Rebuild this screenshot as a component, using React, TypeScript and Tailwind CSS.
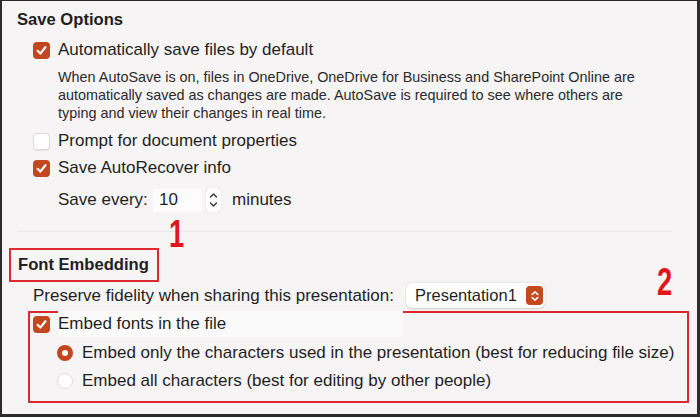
import React from "react";

function Check({ on }: { on: boolean }) {
  if (!on)
    return (
      <div className="w-[17px] h-[17px] rounded-[4px] bg-white border border-[#dcdada] shadow-[0_0.5px_1px_rgba(0,0,0,0.08)] shrink-0" />
    );
  return (
    <div className="w-[17px] h-[17px] rounded-[4px] bg-[#c2461e] flex items-center justify-center shrink-0">
      <svg width="13" height="13" viewBox="0 0 13 13">
        <path d="M2.6 6.8 L5.3 9.6 L10.4 3.2" fill="none" stroke="white" strokeWidth="2.2" strokeLinecap="round" strokeLinejoin="round" />
      </svg>
    </div>
  );
}

function Radio({ on }: { on: boolean }) {
  if (!on)
    return <div className="w-[16px] h-[16px] rounded-full bg-white border border-[#dedcdc] shrink-0" />;
  return (
    <div className="w-[16px] h-[16px] rounded-full bg-[#c2461e] flex items-center justify-center shrink-0">
      <div className="w-[6px] h-[6px] rounded-full bg-white" />
    </div>
  );
}

export default function App() {
  return (
    <div className="w-[700px] h-[417px] overflow-hidden border-[#2b2b2b] border-t border-l-2 border-r-[3px] border-b-[3px] bg-[#f6f4f4] font-['Liberation_Sans',Arial,sans-serif] text-[#1f1f1f]">
      <div className="relative h-full">
        {/* Save Options */}
        <div className="pt-[9px] pl-[15px] text-[16.6px] font-bold leading-[20px]">Save Options</div>

        <div className="mt-[10px] pl-[31px] flex items-center gap-[8px] h-[20px] text-[17px]">
          <Check on={true} />
          <span>Automatically save files by default</span>
        </div>

        <div className="mt-[8px] pl-[56px] text-[14.4px] leading-[18px] text-[#2a2a2a]">
          <div>When AutoSave is on, files in OneDrive, OneDrive for Business and SharePoint Online are</div>
          <div>automatically saved as changes are made. AutoSave is required to see where others are</div>
          <div>typing and view their changes in real time.</div>
        </div>

        <div className="mt-[9px] pl-[31px] flex items-center gap-[8px] h-[20px] text-[17px]">
          <Check on={false} />
          <span>Prompt for document properties</span>
        </div>

        <div className="mt-[7px] pl-[31px] flex items-center gap-[8px] h-[20px] text-[17px]">
          <Check on={true} />
          <span>Save AutoRecover info</span>
        </div>

        <div className="mt-[10px] pl-[56px] flex items-center h-[24px] text-[17px]">
          <span className="w-[95px]">Save every:</span>
          <div className="w-[49px] h-[23px] bg-[#fdfcfc] flex items-center pl-[6px]">10</div>
          <div className="ml-[4px] w-[15px] h-[24px] rounded-[4px] bg-white shadow-[0_0_1px_rgba(0,0,0,0.35)] flex flex-col items-center justify-center">
            <svg width="11" height="20" viewBox="0 0 11 20">
              <path d="M2.5 7 L5.5 4 L8.5 7" fill="none" stroke="#333" strokeWidth="1.4" strokeLinecap="round" strokeLinejoin="round" />
              <path d="M2.5 13 L5.5 16 L8.5 13" fill="none" stroke="#333" strokeWidth="1.4" strokeLinecap="round" strokeLinejoin="round" />
            </svg>
          </div>
          <span className="ml-[11px]">minutes</span>
        </div>

        <div className="mt-[19px] ml-[15px] mr-[25px] h-px bg-[#e9e7e7]" />

        {/* Font Embedding */}
        <div className="mt-[16px] ml-[7px] w-[150px] h-[34px] border-2 border-[#de2a2e] flex items-center pl-[7px] text-[16.6px] font-bold">
          Font Embedding
        </div>

        <div className="mt-px pl-[31px] flex items-center h-[25px] text-[17px]">
          <span className="w-[373px]">Preserve fidelity when sharing this presentation:</span>
          <div className="w-[139px] h-[25px] rounded-[6px] bg-white shadow-[0_0.5px_2px_rgba(0,0,0,0.18)] flex items-center pl-[9px] pr-[2px]">
            <span className="flex-1 text-[16.5px]">Presentation1</span>
            <div className="w-[17px] h-[19px] rounded-[4px] bg-[#c4491f] flex items-center justify-center">
              <svg width="10" height="14" viewBox="0 0 10 14">
                <path d="M2.2 5.5 L5 2.8 L7.8 5.5" fill="none" stroke="white" strokeWidth="1.6" strokeLinecap="round" strokeLinejoin="round" />
                <path d="M2.2 8.5 L5 11.2 L7.8 8.5" fill="none" stroke="white" strokeWidth="1.6" strokeLinecap="round" strokeLinejoin="round" />
              </svg>
            </div>
          </div>
        </div>

        <div className="mt-[3px] ml-[26px] w-[661px] h-[92px] border-2 border-[#de2a2e] text-[17px]">
          <div className="mt-[1px] pl-[3px] flex items-center gap-[8px] h-[20px]">
            <Check on={true} />
            <span className="bg-[#fbfafa] w-[345px]">Embed fonts in the file</span>
          </div>
          <div className="mt-[9px] pl-[27px] flex items-center gap-[9px] h-[20px]">
            <Radio on={true} />
            <span className="whitespace-nowrap">Embed only the characters used in the presentation (best for reducing file size)</span>
          </div>
          <div className="mt-[8px] pl-[27px] flex items-center gap-[9px] h-[20px]">
            <Radio on={false} />
            <span>Embed all characters (best for editing by other people)</span>
          </div>
        </div>

        {/* annotations */}
        <div className="absolute left-[167px] top-[214px] text-[#e0161b] text-[38px] font-black leading-none scale-x-[0.72] origin-left">1</div>
        <div className="absolute left-[655px] top-[262px] text-[#e0161b] text-[38px] font-black leading-none scale-x-[0.72] origin-left">2</div>
      </div>
    </div>
  );
}
